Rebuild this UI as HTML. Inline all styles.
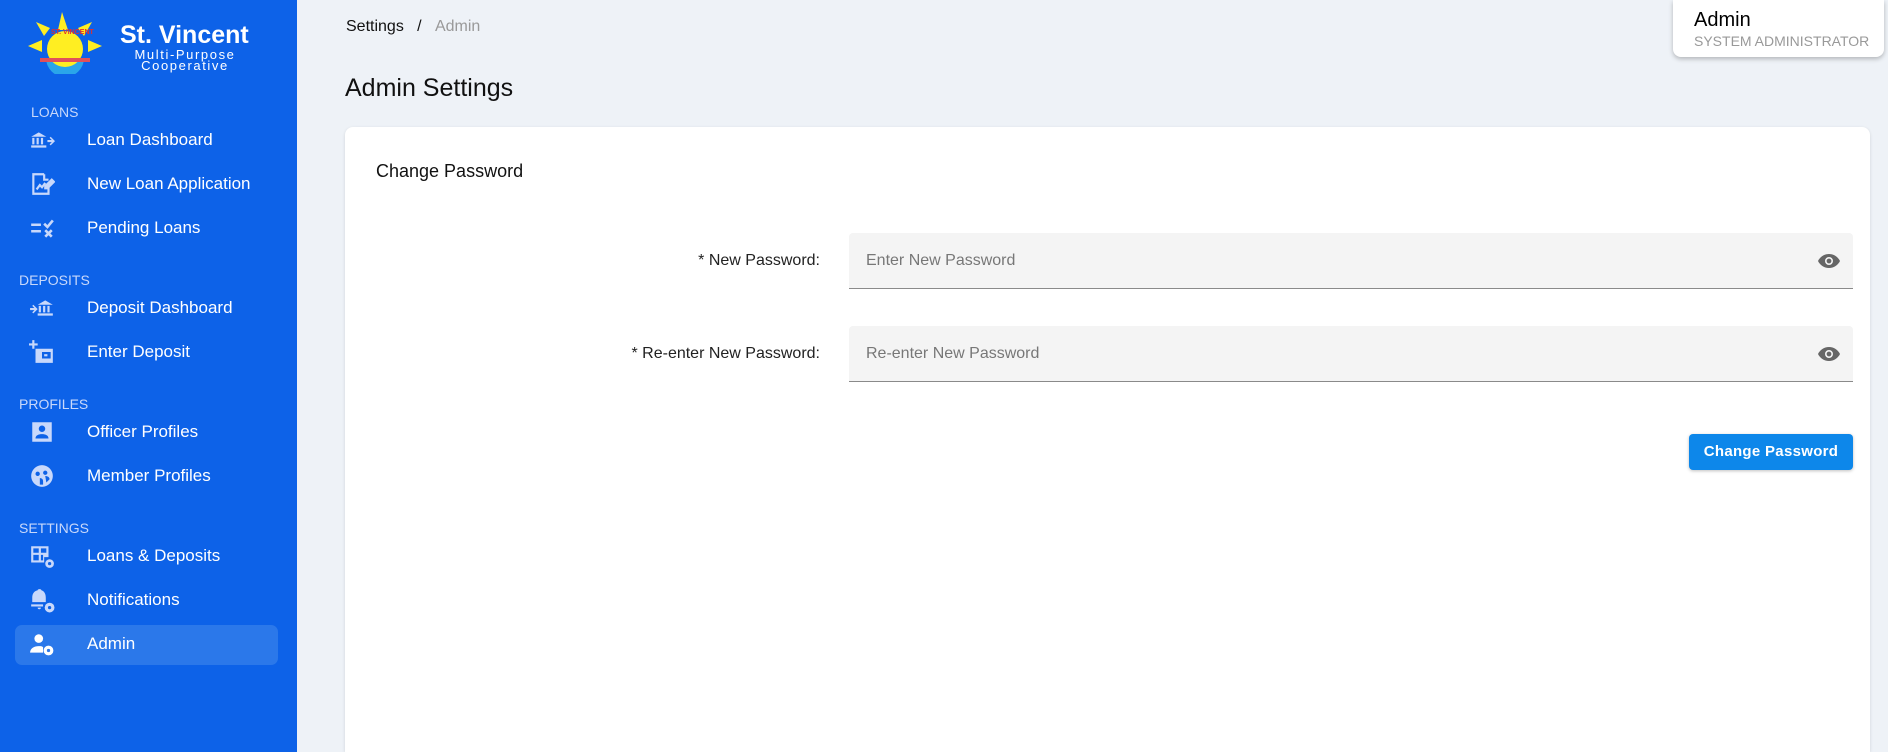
<!DOCTYPE html>
<html><head><meta charset="utf-8"><style>
*{box-sizing:border-box;margin:0;padding:0}
html,body{width:1888px;height:752px;overflow:hidden}
body{background:#eef2f7;font-family:"Liberation Sans",sans-serif;position:relative}
.sb{position:absolute;left:0;top:0;width:297px;height:752px;background:#0d62e8;color:#fff}
.sec{position:absolute;font-size:14px;color:#c8d8fb}
.it{position:absolute;left:87px;font-size:17px;color:#fff;transform:translateY(-50%)}
.ic{position:absolute;left:29px;width:26px;height:26px;transform:translateY(-50%)}
.hl{position:absolute;left:15px;top:625px;width:263px;height:40px;border-radius:7px;background:#2b78ea}
.t{position:absolute;white-space:nowrap}
.card{position:absolute;left:345px;top:127px;width:1525px;height:625px;background:#fff;border-radius:8px 8px 0 0;box-shadow:0 1px 3px rgba(0,0,0,.12)}
.inp{position:absolute;left:849px;width:1004px;height:56px;background:#f4f4f4;border-bottom:1.5px solid #8a8a8a;border-radius:4px 4px 0 0}
.inp span{position:absolute;left:17px;top:50%;transform:translateY(-50%);font-size:16px;color:#777}
.inp svg{position:absolute;right:12px;top:50%;transform:translateY(-50%)}
.lbl{position:absolute;right:1068px;font-size:16px;color:#222;transform:translateY(-50%)}
</style></head><body>
<div class="sb">
<svg style="position:absolute;left:26px;top:12px" width="78" height="62" viewBox="0 0 78 62">
<g fill="#ffee22"><polygon points="36,0 32,18 42,18"/><polygon points="10,10 18,24 24,16"/><polygon points="66,10 52,16 58,24"/><polygon points="2,34 16,28 16,40"/><polygon points="76,34 62,28 62,40"/></g>
<path d="M20 46 A19 19 0 0 0 58 46 Z" fill="#2aa5ea"/>
<circle cx="39" cy="37" r="18" fill="#ffee22"/>
<rect x="14" y="46" width="50" height="4" fill="#e0505a"/>
<text x="25" y="22" font-size="7" fill="#e03030" font-weight="bold" font-family="Liberation Sans">ST. VINCENT</text>
</svg>
<div class="t" style="left:120px;top:21px;font-size:25px;font-weight:bold">St. Vincent</div>
<div class="t" style="left:115px;width:140px;top:49px;font-size:13px;letter-spacing:1.6px;line-height:11px;text-align:center">Multi-Purpose<br>Cooperative</div>

<div class="sec" style="left:31px;top:104px">LOANS</div>
<svg class="ic" style="top:140px" viewBox="0 0 24 24" fill="#c8d8fb"><path d="M2 9l7-4 7 4zM3 10h2v6H3zM7 10h2v6H7zM11 10h2v6h-2zM2 17h14v2H2zM17 12h4l-2-2 1-1 4 4-4 4-1-1 2-2h-4z"/></svg>
<div class="it" style="top:140px">Loan Dashboard</div>
<svg class="ic" style="top:184px" viewBox="0 0 24 24" fill="none" stroke="#c8d8fb" stroke-width="2"><path d="M14 3H4v18h14v-6M14 3v5h4M7 17l3-4 2 2 3-4"/><path d="M15 14l6-6 2 2-6 6h-2z" fill="#c8d8fb"/></svg>
<div class="it" style="top:184px">New Loan Application</div>
<svg class="ic" style="top:228px" viewBox="0 0 24 24" fill="none" stroke="#c8d8fb" stroke-width="2.4"><path d="M2 9h9M2 15h9M14 8l3 3 5-6M15 14l6 6M21 14l-6 6"/></svg>
<div class="it" style="top:228px">Pending Loans</div>

<div class="sec" style="left:19px;top:272px">DEPOSITS</div>
<svg class="ic" style="top:308px" viewBox="0 0 24 24" fill="#c8d8fb"><path d="M8 9l7-4 7 4zM9 10h2v6H9zM13 10h2v6h-2zM17 10h2v6h-2zM8 17h14v2H8zM1 12h4l-2-2 1-1 4 4-4 4-1-1 2-2H1z"/></svg>
<div class="it" style="top:308px">Deposit Dashboard</div>
<svg class="ic" style="top:352px" viewBox="0 0 24 24" fill="#c8d8fb"><path d="M3 1h2v3h3v2H5v3H3V6H0V4h3zM6 9h16v13H6zM12 12v6h8v-6z"/><rect x="14" y="14" width="3" height="2"/></svg>
<div class="it" style="top:352px">Enter Deposit</div>

<div class="sec" style="left:19px;top:396px">PROFILES</div>
<svg class="ic" style="top:432px" viewBox="0 0 24 24" fill="#c8d8fb"><path d="M3 3h18v18H3zM12 6a3 3 0 1 0 0 6 3 3 0 1 0 0-6zM6 18h12c0-3-3-4-6-4s-6 1-6 4z" fill-rule="evenodd"/></svg>
<div class="it" style="top:432px">Officer Profiles</div>
<svg class="ic" style="top:476px" viewBox="0 0 24 24" fill="#c8d8fb"><path d="M12 2a10 10 0 1 0 0 20 10 10 0 1 0 0-20zM8 8a2 2 0 1 0 0 4 2 2 0 0 0 0-4zM15 7a2 2 0 1 0 0 4 2 2 0 0 0 0-4zM10 14c2 0 3 1 3 3v3h-3zM15 12c2 0 4 1 4 3l-3 3z" fill-rule="evenodd"/></svg>
<div class="it" style="top:476px">Member Profiles</div>

<div class="sec" style="left:19px;top:520px">SETTINGS</div>
<svg class="ic" style="top:556px" viewBox="0 0 24 24" fill="#c8d8fb"><path d="M2 3h16v10h-4v5H2zM4 5v4h5V5zM11 5v4h5V5zM4 11v5h5v-5zM11 11v5h2v-5z" fill-rule="evenodd"/><circle cx="19" cy="19" r="4"/><circle cx="19" cy="19" r="1.5" fill="#0d62e8"/></svg>
<div class="it" style="top:556px">Loans &amp; Deposits</div>
<svg class="ic" style="top:600px" viewBox="0 0 24 24" fill="#c8d8fb"><path d="M10 2c1 0 1.5 1 1.5 1 3 1 4 4 4 7v4H3v-4c0-3 1-6 5-7 0 0 0-1 2-1zM2 16h11v2H2zM8 19h3a1.5 1.5 0 0 1-3 0z"/><circle cx="19" cy="19" r="4.5"/><circle cx="19" cy="19" r="1.5" fill="#0d62e8"/></svg>
<div class="it" style="top:600px">Notifications</div>
<div class="hl"></div>
<svg class="ic" style="top:644px" viewBox="0 0 24 24" fill="#fff"><circle cx="9" cy="7" r="4"/><path d="M1 20c0-4 4-6 8-6 2 0 3 0 4 1v5z"/><circle cx="18" cy="18" r="4.5"/><circle cx="18" cy="18" r="1.5" fill="#2b78ea"/></svg>
<div class="it" style="top:644px">Admin</div>
</div>

<div class="t" style="left:346px;top:18px;font-size:16px;color:#111">Settings&nbsp;&nbsp;&nbsp;/&nbsp;&nbsp;&nbsp;<span style="color:#999">Admin</span></div>
<div class="t" style="left:345px;top:74px;font-size:25px;color:#111">Admin Settings</div>

<div style="position:absolute;left:1673px;top:0;width:211px;height:57px;background:#fff;border-radius:0 0 8px 8px;box-shadow:0 2px 5px rgba(0,0,0,.25)">
<div class="t" style="left:21px;top:9px;font-size:20px;color:#000">Admin</div>
<div class="t" style="left:21px;top:33px;font-size:14px;color:#999">SYSTEM ADMINISTRATOR</div>
</div>

<div class="card"></div>
<div class="t" style="left:376px;top:161px;font-size:18px;color:#111">Change Password</div>
<div class="lbl" style="top:261px">* New Password:</div>
<div class="inp" style="top:233px"><span>Enter New Password</span><svg width="24" height="24" viewBox="0 0 24 24"><path fill="#666" d="M12 5C7 5 3 8 1 12c2 4 6 7 11 7s9-3 11-7c-2-4-6-7-11-7zm0 11a4 4 0 1 1 0-8 4 4 0 0 1 0 8zm0-6.4a2.4 2.4 0 1 0 0 4.8 2.4 2.4 0 0 0 0-4.8z"/></svg></div>
<div class="lbl" style="top:354px">* Re-enter New Password:</div>
<div class="inp" style="top:326px"><span>Re-enter New Password</span><svg width="24" height="24" viewBox="0 0 24 24"><path fill="#666" d="M12 5C7 5 3 8 1 12c2 4 6 7 11 7s9-3 11-7c-2-4-6-7-11-7zm0 11a4 4 0 1 1 0-8 4 4 0 0 1 0 8zm0-6.4a2.4 2.4 0 1 0 0 4.8 2.4 2.4 0 0 0 0-4.8z"/></svg></div>
<div style="position:absolute;left:1689px;top:434px;width:164px;height:36px;background:#0d87ea;border-radius:4px;box-shadow:0 1px 3px rgba(0,0,0,.25);color:#fff;font-size:15px;font-weight:bold;text-align:center;line-height:36px;letter-spacing:.3px">Change Password</div>
</body></html>
